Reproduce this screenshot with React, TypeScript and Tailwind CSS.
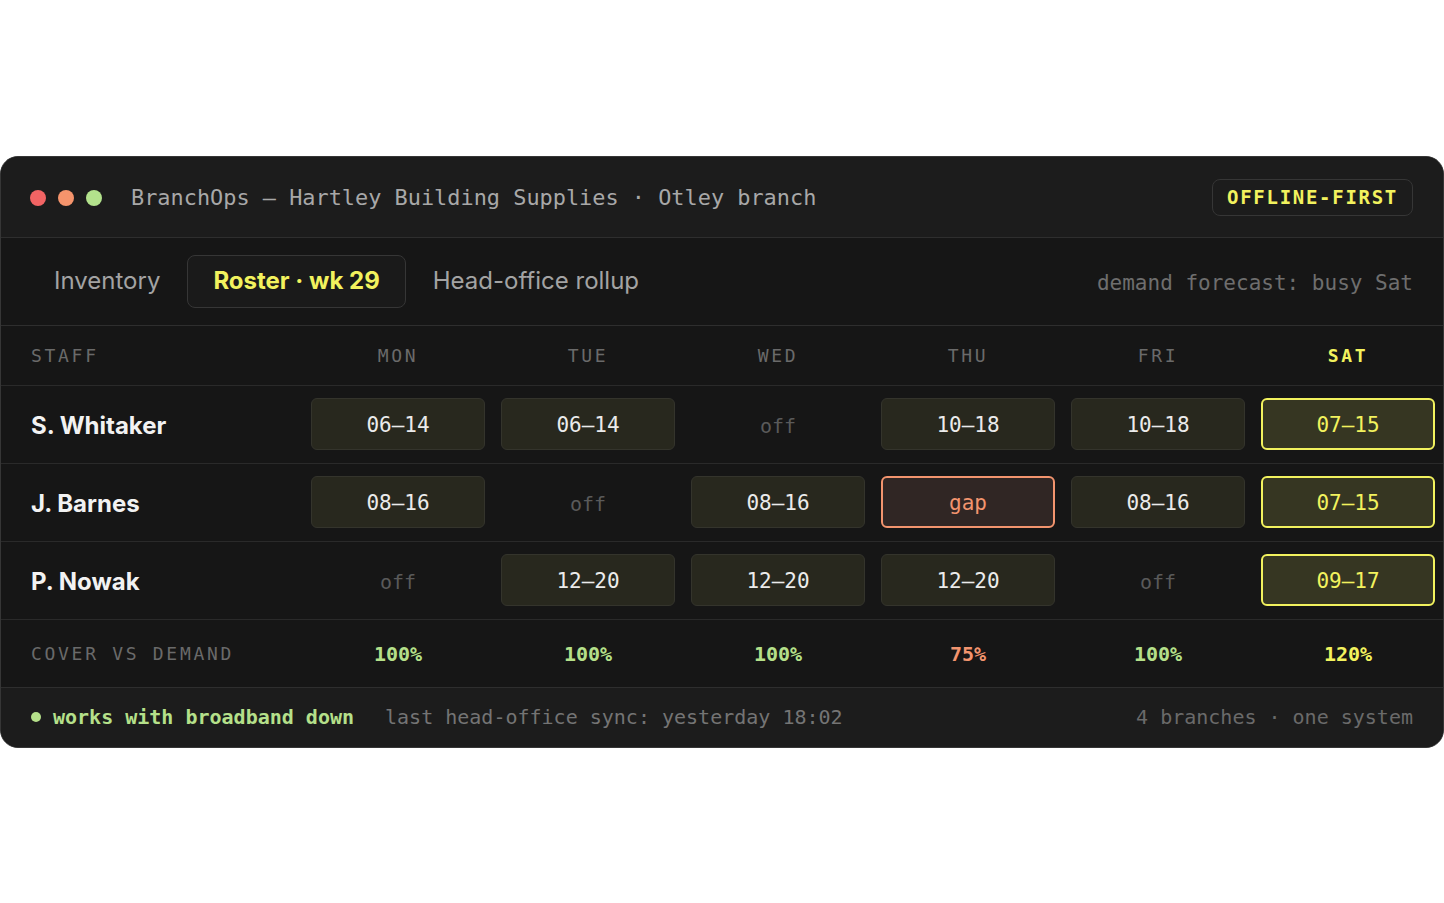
const mono = "font-['DejaVu_Sans_Mono',monospace]";
const sans = "font-['Inter','Liberation_Sans',sans-serif]";

type Shift = { kind: "shift" | "off" | "gap"; text: string };

const days = ["MON", "TUE", "WED", "THU", "FRI", "SAT"];

const rows: { name: string; shifts: Shift[] }[] = [
  {
    name: "S. Whitaker",
    shifts: [
      { kind: "shift", text: "06–14" },
      { kind: "shift", text: "06–14" },
      { kind: "off", text: "off" },
      { kind: "shift", text: "10–18" },
      { kind: "shift", text: "10–18" },
      { kind: "shift", text: "07–15" },
    ],
  },
  {
    name: "J. Barnes",
    shifts: [
      { kind: "shift", text: "08–16" },
      { kind: "off", text: "off" },
      { kind: "shift", text: "08–16" },
      { kind: "gap", text: "gap" },
      { kind: "shift", text: "08–16" },
      { kind: "shift", text: "07–15" },
    ],
  },
  {
    name: "P. Nowak",
    shifts: [
      { kind: "off", text: "off" },
      { kind: "shift", text: "12–20" },
      { kind: "shift", text: "12–20" },
      { kind: "shift", text: "12–20" },
      { kind: "off", text: "off" },
      { kind: "shift", text: "09–17" },
    ],
  },
];

const cover = [
  { v: "100%", c: "text-[#b5e08a]" },
  { v: "100%", c: "text-[#b5e08a]" },
  { v: "100%", c: "text-[#b5e08a]" },
  { v: "75%", c: "text-[#f2946e]" },
  { v: "100%", c: "text-[#b5e08a]" },
  { v: "120%", c: "text-[#f2f25e]" },
];

function Cell({ shift, sat }: { shift: Shift; sat: boolean }) {
  if (shift.kind === "off") {
    return (
      <div className={`${mono} text-[20px] text-[#5a5a5a] h-[52px] pt-[3px] flex items-center justify-center`}>
        off
      </div>
    );
  }
  if (shift.kind === "gap") {
    return (
      <div
        className={`${mono} text-[21px] h-[52px] pt-[3px] rounded-[6px] border-2 border-[#f2946e] bg-[#302624] text-[#f2946e] flex items-center justify-center`}
      >
        gap
      </div>
    );
  }
  if (sat) {
    return (
      <div
        className={`${mono} text-[21px] h-[52px] pt-[3px] rounded-[6px] border-2 border-[#f2f25e] bg-[#363622] text-[#f2f25e] flex items-center justify-center`}
      >
        {shift.text}
      </div>
    );
  }
  return (
    <div
      className={`${mono} text-[21px] h-[52px] pt-[3px] rounded-[6px] border border-[#34342c] bg-[#28281e] text-[#ebebeb] flex items-center justify-center`}
    >
      {shift.text}
    </div>
  );
}

export default function App() {
  return (
    <div className="min-h-screen bg-white flex items-center">
      <div className="w-full rounded-[18px] border border-[#363636] bg-[#161616] overflow-hidden">
        {/* Title bar */}
        <div className="h-[81px] bg-[#1c1c1c] border-b border-[#2e2e2e] flex items-center pt-[2px] pl-[29px] pr-[30px]">
          <div className="flex gap-[12px]">
            <span className="w-[16px] h-[16px] rounded-full bg-[#f26464]" />
            <span className="w-[16px] h-[16px] rounded-full bg-[#f5946c]" />
            <span className="w-[16px] h-[16px] rounded-full bg-[#b3e28c]" />
          </div>
          <p className={`${mono} text-[21.9px] text-[#a8a8a8] ml-[29px] pt-[2px]`}>
            BranchOps — Hartley Building Supplies · Otley branch
          </p>
          <div
            className={`${mono} ml-auto h-[37px] px-[14px] flex items-center rounded-[8px] border border-[#363636] text-[19px] font-bold tracking-[0.09em] text-[#f2f25e]`}
          >
            OFFLINE-FIRST
          </div>
        </div>

        {/* Tabs */}
        <div className="h-[88px] border-b border-[#2e2e2e] flex items-center pl-[28px] pr-[30px]">
          <div className={`${sans} flex items-center gap-[2px] text-[24px]`}>
            <button className="px-[25px] h-[53px] text-[#a3a3a3]">Inventory</button>
            <button className="px-[25px] h-[53px] rounded-[8px] border border-[#363636] bg-[#1a1a1a] font-bold text-[#f2f25e]">
              Roster · wk 29
            </button>
            <button className="px-[25px] h-[53px] text-[#a3a3a3]">Head-office rollup</button>
          </div>
          <p className={`${mono} ml-auto pt-[6px] text-[21px] text-[#6e6e6e]`}>demand forecast: busy Sat</p>
        </div>

        {/* Header row */}
        <div className="grid grid-cols-[302px_repeat(6,1fr)] h-[60px] border-b border-[#2a2a2a] items-center">
          <span className={`${mono} pl-[30px] text-[18px] tracking-[0.15em] text-[#6a6a6a]`}>STAFF</span>
          {days.map((d) => (
            <span
              key={d}
              className={`${mono} text-center text-[18px] tracking-[0.15em] ${
                d === "SAT" ? "text-[#f2f25e] font-bold" : "text-[#6a6a6a]"
              }`}
            >
              {d}
            </span>
          ))}
        </div>

        {/* Staff rows */}
        {rows.map((r) => (
          <div
            key={r.name}
            className="grid grid-cols-[302px_repeat(6,1fr)] h-[78px] border-b border-[#2a2a2a] items-center"
          >
            <span className={`${sans} pl-[30px] pt-[3px] text-[24px] font-bold text-[#f2f2f2]`}>{r.name}</span>
            {r.shifts.map((s, i) => (
              <div key={i} className="px-[8px]">
                <Cell shift={s} sat={i === 5} />
              </div>
            ))}
          </div>
        ))}

        {/* Cover vs demand */}
        <div className="grid grid-cols-[302px_repeat(6,1fr)] h-[68px] border-b border-[#2e2e2e] items-center">
          <span className={`${mono} pl-[30px] text-[18px] tracking-[0.15em] text-[#6a6a6a]`}>
            COVER VS DEMAND
          </span>
          {cover.map((c, i) => (
            <span key={i} className={`${mono} text-center pt-[2px] text-[20px] font-bold ${c.c}`}>
              {c.v}
            </span>
          ))}
        </div>

        {/* Footer */}
        <div className={`${mono} h-[59px] bg-[#1c1c1c] flex items-center pl-[30px] pr-[30px] text-[20px]`}>
          <span className="flex items-center gap-[12px] font-bold text-[#b5e08a]">
            <span className="w-[10px] h-[10px] rounded-full bg-[#b5e08a]" />
            works with broadband down
          </span>
          <span className="ml-[31px] text-[#747474]">last head-office sync: yesterday 18:02</span>
          <span className="ml-auto text-[#6a6a6a]">4 branches · one system</span>
        </div>
      </div>
    </div>
  );
}
